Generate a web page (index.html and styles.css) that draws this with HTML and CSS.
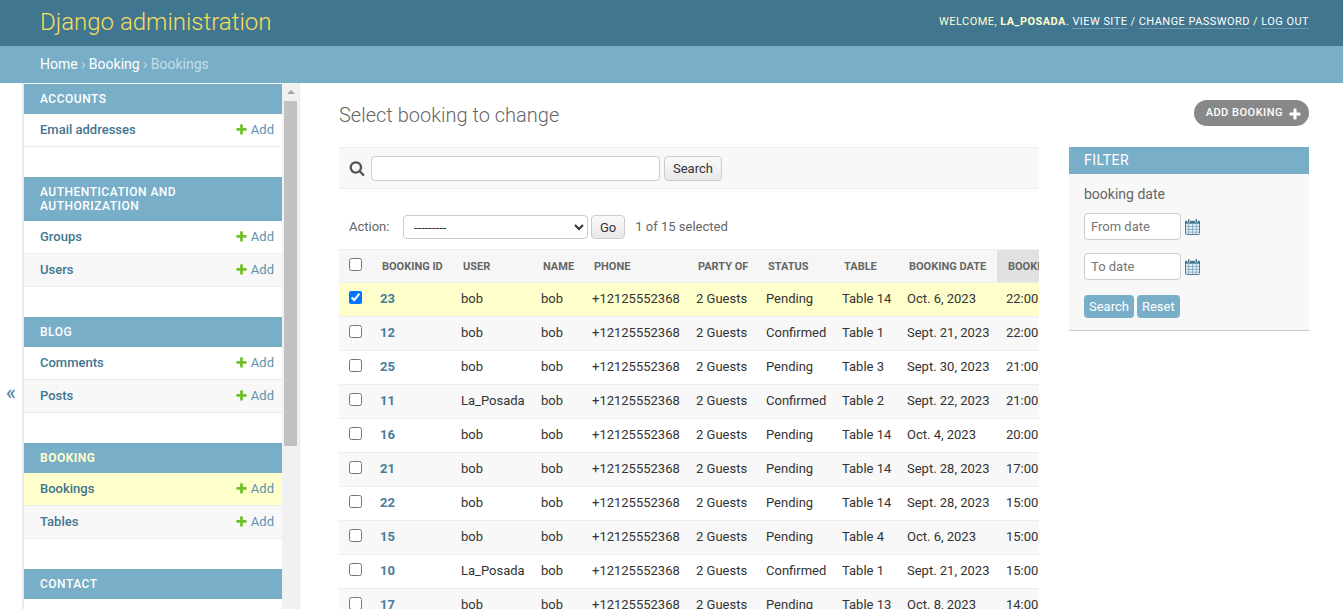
FILE: index.html
```html
<!DOCTYPE html>
<html lang="en">
<head>
    <meta charset="UTF-8">
    <title>Select booking to change | Django site admin</title>
    <link rel="stylesheet" href="styles.css">
</head>
<body>
    <svg class="defs" width="0" height="0">
        <symbol id="plus" viewBox="0 0 1792 1792"><path d="M1600 796v192q0 40-28 68t-68 28h-416v416q0 40-28 68t-68 28h-192q-40 0-68-28t-28-68v-416h-416q-40 0-68-28t-28-68v-192q0-40 28-68t68-28h416v-416q0-40 28-68t68-28h192q40 0 68 28t28 68v416h416q40 0 68 28t28 68z"/></symbol>
        <symbol id="calendar" viewBox="0 0 16 17">
            <rect x="0.5" y="2.5" width="15" height="14" rx="1" fill="#e4eef3" stroke="#417690"/>
            <rect x="0" y="2" width="16" height="3" fill="#417690"/>
            <rect x="2.5" y="0" width="3" height="4" rx="1.5" fill="#fff"/>
            <rect x="10.5" y="0" width="3" height="4" rx="1.5" fill="#fff"/>
            <rect x="3.2" y="0" width="1.6" height="4" rx="0.8" fill="#417690"/>
            <rect x="11.2" y="0" width="1.6" height="4" rx="0.8" fill="#417690"/>
            <path d="M1 8h14M1 11h14M1 14h14M4 5v11M8 5v11M12 5v11" stroke="#7ba3b8" stroke-width="0.8"/>
        </symbol>
    </svg>

    <header class="header">
        <h1 class="brand">Django administration</h1>
        <div class="user-tools">
            Welcome, <strong>La_Posada</strong>.
            <a href="#">View site</a> / <a href="#">Change password</a> / <a href="#">Log out</a>
        </div>
    </header>
    <nav class="breadcrumbs"><a href="#">Home</a> › <a href="#">Booking</a> › Bookings</nav>

    <div class="main">
        <button class="toggle-nav">«</button>
        <aside class="sidebar">
            <div class="sidebar-inner">
                <section class="module">
                    <h2 class="caption">Accounts</h2>
                    <div class="nav-row"><a class="model" href="#">Email addresses</a><a class="add" href="#"><svg class="icon-add"><use href="#plus"/></svg>Add</a></div>
                </section>
                <section class="module">
                    <h2 class="caption">Authentication and Authorization</h2>
                    <div class="nav-row"><a class="model" href="#">Groups</a><a class="add" href="#"><svg class="icon-add"><use href="#plus"/></svg>Add</a></div>
                    <div class="nav-row alt"><a class="model" href="#">Users</a><a class="add" href="#"><svg class="icon-add"><use href="#plus"/></svg>Add</a></div>
                </section>
                <section class="module">
                    <h2 class="caption">Blog</h2>
                    <div class="nav-row"><a class="model" href="#">Comments</a><a class="add" href="#"><svg class="icon-add"><use href="#plus"/></svg>Add</a></div>
                    <div class="nav-row alt"><a class="model" href="#">Posts</a><a class="add" href="#"><svg class="icon-add"><use href="#plus"/></svg>Add</a></div>
                </section>
                <section class="module">
                    <h2 class="caption current">Booking</h2>
                    <div class="nav-row current"><a class="model" href="#">Bookings</a><a class="add" href="#"><svg class="icon-add"><use href="#plus"/></svg>Add</a></div>
                    <div class="nav-row alt"><a class="model" href="#">Tables</a><a class="add" href="#"><svg class="icon-add"><use href="#plus"/></svg>Add</a></div>
                </section>
                <section class="module">
                    <h2 class="caption">Contact</h2>
                </section>
            </div>
            <div class="scrollbar">
                <div class="scroll-arrow"></div>
                <div class="scroll-thumb"></div>
            </div>
        </aside>

        <main class="content">
            <div class="title-row">
                <h1 class="title">Select booking to change</h1>
                <a class="addlink" href="#">Add booking<svg class="icon-addlink"><use href="#plus"/></svg></a>
            </div>
            <div class="columns">
                <div class="changelist">
                    <form class="toolbar">
                        <svg class="icon-search" viewBox="0 0 1792 1792"><path d="M1216 832q0-185-131.500-316.500t-316.500-131.500-316.500 131.500-131.500 316.500 131.500 316.500 316.500 131.500 316.500-131.500 131.500-316.500zm512 832q0 52-38 90t-90 38q-54 0-90-38l-343-342q-179 124-399 124-143 0-273.500-55.500t-225-150-150-225-55.500-273.500 55.500-273.500 150-225 225-150 273.500-55.500 273.500 55.500 225 150 150 225 55.500 273.500q0 220-124 399l343 343q37 37 37 90z"/></svg>
                        <input class="search-input" type="text">
                        <button class="btn" type="button">Search</button>
                    </form>
                    <div class="actions">
                        <label class="action-label">Action:</label>
                        <select class="action-select"><option>---------</option></select>
                        <button class="btn go" type="button">Go</button>
                        <span class="selected-count">1 of 15 selected</span>
                    </div>
                    <div class="results">
                        <table class="result-table">
                            <colgroup>
                                <col class="c-check"><col class="c-id"><col class="c-user"><col class="c-name"><col class="c-phone"><col class="c-party"><col class="c-status"><col class="c-table"><col class="c-date"><col class="c-time">
                            </colgroup>
                            <thead>
                                <tr>
                                    <th class="check"><input type="checkbox"></th>
                                    <th>Booking ID</th><th>User</th><th>Name</th><th>Phone</th><th>Party of</th><th>Status</th><th>Table</th><th>Booking date</th><th class="sorted">Booking time</th>
                                </tr>
                            </thead>
                            <tbody>
                                <tr class="selected"><td class="check"><input type="checkbox" checked></td><td><a href="#">23</a></td><td>bob</td><td>bob</td><td>+12125552368</td><td>2 Guests</td><td>Pending</td><td>Table 14</td><td>Oct. 6, 2023</td><td>22:00</td></tr>
                                <tr class="alt"><td class="check"><input type="checkbox"></td><td><a href="#">12</a></td><td>bob</td><td>bob</td><td>+12125552368</td><td>2 Guests</td><td>Confirmed</td><td>Table 1</td><td>Sept. 21, 2023</td><td>22:00</td></tr>
                                <tr><td class="check"><input type="checkbox"></td><td><a href="#">25</a></td><td>bob</td><td>bob</td><td>+12125552368</td><td>2 Guests</td><td>Pending</td><td>Table 3</td><td>Sept. 30, 2023</td><td>21:00</td></tr>
                                <tr class="alt"><td class="check"><input type="checkbox"></td><td><a href="#">11</a></td><td>La_Posada</td><td>bob</td><td>+12125552368</td><td>2 Guests</td><td>Confirmed</td><td>Table 2</td><td>Sept. 22, 2023</td><td>21:00</td></tr>
                                <tr><td class="check"><input type="checkbox"></td><td><a href="#">16</a></td><td>bob</td><td>bob</td><td>+12125552368</td><td>2 Guests</td><td>Pending</td><td>Table 14</td><td>Oct. 4, 2023</td><td>20:00</td></tr>
                                <tr class="alt"><td class="check"><input type="checkbox"></td><td><a href="#">21</a></td><td>bob</td><td>bob</td><td>+12125552368</td><td>2 Guests</td><td>Pending</td><td>Table 14</td><td>Sept. 28, 2023</td><td>17:00</td></tr>
                                <tr><td class="check"><input type="checkbox"></td><td><a href="#">22</a></td><td>bob</td><td>bob</td><td>+12125552368</td><td>2 Guests</td><td>Pending</td><td>Table 14</td><td>Sept. 28, 2023</td><td>15:00</td></tr>
                                <tr class="alt"><td class="check"><input type="checkbox"></td><td><a href="#">15</a></td><td>bob</td><td>bob</td><td>+12125552368</td><td>2 Guests</td><td>Pending</td><td>Table 4</td><td>Oct. 6, 2023</td><td>15:00</td></tr>
                                <tr><td class="check"><input type="checkbox"></td><td><a href="#">10</a></td><td>La_Posada</td><td>bob</td><td>+12125552368</td><td>2 Guests</td><td>Confirmed</td><td>Table 1</td><td>Sept. 21, 2023</td><td>15:00</td></tr>
                                <tr class="alt"><td class="check"><input type="checkbox"></td><td><a href="#">17</a></td><td>bob</td><td>bob</td><td>+12125552368</td><td>2 Guests</td><td>Pending</td><td>Table 13</td><td>Oct. 8, 2023</td><td>14:00</td></tr>
                            </tbody>
                        </table>
                    </div>
                </div>

                <aside class="filter">
                    <h2 class="filter-title">Filter</h2>
                    <div class="filter-body">
                        <h3 class="filter-name">booking date</h3>
                        <div class="date-row"><input class="date-input" type="text" placeholder="From date"><svg class="icon-cal"><use href="#calendar"/></svg></div>
                        <div class="date-row"><input class="date-input" type="text" placeholder="To date"><svg class="icon-cal"><use href="#calendar"/></svg></div>
                        <div class="filter-buttons">
                            <button class="btn-filter" type="button">Search</button>
                            <button class="btn-filter" type="button">Reset</button>
                        </div>
                    </div>
                </aside>
            </div>
        </main>
    </div>
</body>
</html>
```

FILE: styles.css
```css
* {
    box-sizing: border-box;
}

html, body {
    height: 100%;
}

body {
    margin: 0;
    display: flex;
    flex-direction: column;
    overflow: hidden;
    font-family: Roboto, "Liberation Sans", sans-serif;
    font-size: 14px;
    color: #333;
    background-color: #fff;
}

a {
    text-decoration: none;
    color: #447e9b;
}

.defs {
    position: absolute;
}

/* header */
.header {
    height: 46px;
    flex: none;
    display: flex;
    justify-content: space-between;
    align-items: center;
    padding: 0 34px 0 40px;
    background-color: #417690;
    color: #ffc;
}

.brand {
    margin: 0 0 2px;
    font-size: 24px;
    font-weight: 300;
    color: #f5dd5d;
}

.user-tools {
    margin-bottom: 3px;
    font-size: 11px;
    letter-spacing: 0.45px;
    text-transform: uppercase;
}

.user-tools a {
    color: #fff;
    border-bottom: 1px solid rgba(255, 255, 255, 0.25);
}

.breadcrumbs {
    height: 37px;
    flex: none;
    padding: 10px 40px;
    font-size: 14px;
    line-height: 16px;
    background-color: #79aec8;
    color: #c4dce8;
}

.breadcrumbs a {
    color: #fff;
}

/* layout */
.main {
    flex: 1;
    display: flex;
    min-height: 0;
}

.toggle-nav {
    width: 24px;
    flex: none;
    padding: 92px 0 0 0;
    border: 0;
    border-right: 2px solid #eaeaea;
    font-family: inherit;
    font-size: 22px;
    font-weight: 400;
    color: #447e9b;
    background-color: #fff;
}

.sidebar {
    width: 276px;
    flex: none;
    display: flex;
    border-right: 1px solid #eaeaea;
    overflow: hidden;
}

.sidebar-inner {
    width: 258px;
    flex: none;
    padding-top: 1px;
}

.module {
    margin-bottom: 30px;
}

.caption {
    margin: 0;
    padding: 8px 16px;
    font-size: 12px;
    line-height: 14px;
    font-weight: 500;
    letter-spacing: 0.5px;
    text-transform: uppercase;
    color: #fff;
    background-color: #79aec8;
}

.caption.current {
    color: #ffc;
    font-weight: 700;
}

.nav-row {
    height: 33px;
    display: flex;
    justify-content: space-between;
    align-items: center;
    padding: 0 8px 2px 16px;
    font-size: 13px;
    border-bottom: 1px solid #eaeaea;
}

.nav-row.alt {
    background-color: #f8f8f8;
}

.nav-row.current {
    background-color: #ffc;
}

.model {
    font-weight: 500;
    color: #417690;
}

.add {
    display: flex;
    align-items: center;
    gap: 3px;
    color: #5e93ad;
}

.icon-add {
    width: 13px;
    height: 13px;
    fill: #70bf2b;
}

.scrollbar {
    width: 17px;
    flex: none;
    padding: 0 2px 0 2px;
    background-color: #f1f1f1;
}

.scroll-arrow {
    width: 0;
    height: 0;
    margin: 7px auto 7px;
    border: 4px solid transparent;
    border-top: 0;
    border-bottom: 4px solid #a3a3a3;
}

.scroll-thumb {
    height: 345px;
    background-color: #c1c1c1;
}

/* content */
.content {
    flex: 1;
    min-width: 0;
    padding: 17px 34px 0 39px;
}

.title-row {
    display: flex;
    justify-content: space-between;
    align-items: flex-start;
    height: 47px;
}

.title {
    margin: 3px 0 0;
    font-size: 20px;
    line-height: 24px;
    font-weight: 300;
    color: #666;
}

.addlink {
    height: 26px;
    display: flex;
    align-items: center;
    gap: 5px;
    padding: 0 7px 2px 12px;
    font-size: 11px;
    font-weight: 500;
    letter-spacing: 0.5px;
    text-transform: uppercase;
    color: #fff;
    background-color: #888;
    border-radius: 15px;
}

.icon-addlink {
    width: 14px;
    height: 14px;
    margin-top: 3px;
    fill: #fff;
}

.columns {
    display: flex;
    gap: 30px;
    align-items: flex-start;
}

.changelist {
    width: 700px;
    flex: none;
}

.toolbar {
    height: 42px;
    display: flex;
    align-items: center;
    gap: 4px;
    padding-left: 10px;
    background-color: #f8f8f8;
    border-top: 1px solid #eee;
    border-bottom: 1px solid #eee;
}

.icon-search {
    width: 16px;
    height: 16px;
    margin-right: 2px;
    fill: #555;
}

.search-input {
    width: 289px;
    height: 25px;
    padding: 2px 5px;
    background-color: #fff;
    border: 1px solid #ccc;
    border-radius: 4px;
}

.btn {
    height: 25px;
    padding: 0 8px;
    font-family: inherit;
    font-size: 13px;
    color: #333;
    background: linear-gradient(#fafafa, #e8e8e8);
    border: 1px solid #ccc;
    border-radius: 4px;
}

.actions {
    display: flex;
    align-items: center;
    height: 24px;
    margin-top: 26px;
    margin-bottom: 10px;
    padding-left: 10px;
    font-size: 13px;
    color: #666;
}

.action-label {
    width: 54px;
    margin-bottom: 2px;
}

.action-select {
    width: 185px;
    height: 24px;
    padding: 0 6px;
    font-family: inherit;
    font-size: 13px;
    color: #333;
    background-color: #fff;
    border: 1px solid #ccc;
    border-radius: 4px;
}

.btn.go {
    height: 24px;
    margin-left: 3px;
    padding: 0 8px;
}

.selected-count {
    margin-left: 10px;
    margin-bottom: 2px;
}

.results {
    overflow: hidden;
}

.result-table {
    width: 800px;
    table-layout: fixed;
    border-collapse: collapse;
    font-size: 13px;
}

.c-check { width: 31px; }
.c-id { width: 81px; }
.c-user { width: 80px; }
.c-name { width: 51px; }
.c-phone { width: 104px; }
.c-party { width: 70px; }
.c-status { width: 76px; }
.c-table { width: 65px; }
.c-date { width: 100px; }
.c-time { width: 142px; }

.result-table th {
    height: 33px;
    padding: 0 12px;
    text-align: left;
    white-space: nowrap;
    font-size: 11px;
    font-weight: 700;
    letter-spacing: 0;
    text-transform: uppercase;
    color: #666;
    background-color: #f6f6f6;
    border-top: 1px solid #eee;
    border-bottom: 1px solid #eee;
}

.result-table th.sorted {
    padding-left: 11px;
    background-color: #e1e1e1;
}

.result-table td {
    height: 34px;
    padding: 0 10px 2px;
    white-space: nowrap;
    border-bottom: 1px solid #eee;
}

.result-table td:last-child {
    padding-left: 9px;
}

.result-table td a {
    font-weight: 700;
}

.result-table th.check, .result-table td.check {
    padding: 0 0 4px 10px;
}

.check input {
    display: block;
    width: 13px;
    height: 13px;
    margin: 0;
}

tr.alt td {
    background-color: #f8f8f8;
}

tr.selected td {
    background-color: #ffc;
}

/* filter */
.filter {
    width: 240px;
    flex: none;
    background-color: #f8f8f8;
    border-bottom: 1px solid #ccc;
}

.filter-title {
    margin: 0;
    padding: 5px 15px 6px;
    font-size: 14px;
    line-height: 16px;
    font-weight: 400;
    letter-spacing: 0.5px;
    text-transform: uppercase;
    color: #fff;
    background-color: #79aec8;
}

.filter-body {
    padding: 12px 15px 12px;
}

.filter-name {
    margin: 0 0 11px;
    font-size: 14px;
    line-height: 16px;
    font-weight: 400;
    color: #666;
}

.date-row {
    display: flex;
    align-items: center;
    gap: 4px;
    margin-bottom: 13px;
}

.date-input {
    width: 97px;
    height: 27px;
    padding: 2px 6px;
    font-family: inherit;
    font-size: 13px;
    background-color: #fff;
    border: 1px solid #ccc;
    border-radius: 4px;
}

.date-input::placeholder {
    color: #757575;
}

.icon-cal {
    width: 15px;
    height: 16px;
}

.filter-buttons {
    display: flex;
    gap: 3px;
    margin-top: 15px;
}

.btn-filter {
    height: 23px;
    padding: 0 5px;
    font-family: inherit;
    font-size: 13px;
    color: #fff;
    background-color: #79aec8;
    border: 0;
    border-radius: 4px;
}
```
